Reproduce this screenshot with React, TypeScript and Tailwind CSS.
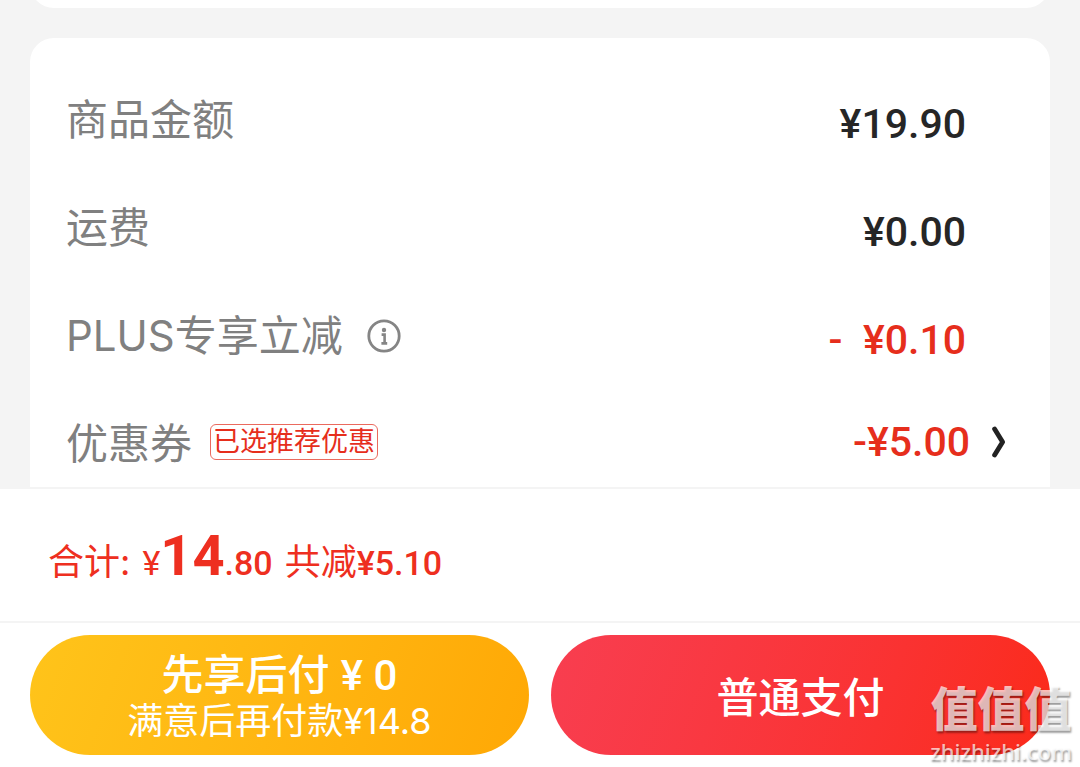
import React from 'react';
import clsx from 'clsx';

interface PriceRowProps {
  label: string;
  value: string;
  discount?: boolean;
  children?: React.ReactNode;
}

const PriceRow: React.FC<PriceRowProps> = ({ label, value, discount, children }) => (
  <div className="flex h-27 items-center justify-between pr-12">
    <dt className="flex items-center text-[42px] leading-[60px] text-[#808080]">
      {label}
      {children}
    </dt>
    <dd
      className={clsx(
        'pt-2 font-[Roboto] text-[41px] leading-[60px] font-medium whitespace-pre',
        discount ? 'text-[#e62e1c]' : 'text-[#262626]'
      )}
    >
      {value}
    </dd>
  </div>
);

const InfoIcon = () => (
  <svg width="34" height="34" viewBox="0 0 34 34" fill="none" aria-hidden="true">
    <circle cx="17" cy="17" r="15.2" stroke="#858585" strokeWidth="2.8" />
    <circle cx="17" cy="11" r="2.2" fill="#858585" />
    <path d="M14.6 15.6H17.6V24.4M14.4 24.4H20.2" stroke="#858585" strokeWidth="2.6" />
  </svg>
);

const ChevronIcon = () => (
  <svg width="14" height="32" viewBox="0 0 14 32" fill="none" aria-hidden="true">
    <path d="M2.6 3L10.6 16L2.6 29" stroke="#222" strokeWidth="4.8" strokeLinecap="round" strokeLinejoin="round" />
  </svg>
);

const Watermark = () => (
  <div className="pointer-events-none absolute right-2 bottom-1.5 flex flex-col items-center gap-2 text-white/70 [text-shadow:1px_2px_2px_rgba(0,0,0,0.4)]">
    <span className="text-[47px] leading-[48px] font-black">值值值</span>
    <span className="font-['Noto_Sans'] text-[22px] leading-5 font-medium">zhizhizhi.com</span>
  </div>
);

export default function App() {
  return (
    <div className="relative flex h-screen flex-col overflow-hidden bg-[#f4f4f4] font-['Inter','Noto_Sans_CJK_SC',sans-serif]">
      <main className="flex min-h-0 flex-1 flex-col px-7.5">
        <div className="-mt-10 h-12 shrink-0 rounded-b-3xl bg-white" />
        <dl className="mt-7.5 flex-1 overflow-hidden rounded-t-3xl bg-white px-9 pt-7">
          <PriceRow label="商品金额" value="¥19.90" />
          <PriceRow label="运费" value="¥0.00" />
          <PriceRow label="PLUS专享立减" value="-  ¥0.10" discount>
            <button type="button" aria-label="说明" className="ml-6">
              <InfoIcon />
            </button>
          </PriceRow>
          <div className="flex h-27 items-center justify-between pr-2">
            <dt className="flex items-center text-[42px] leading-[60px] text-[#808080]">
              优惠券
              <span className="mb-1 ml-4.5 rounded-md border border-[#ea6a5e] px-0.5 text-[27px] leading-[34px] text-[#e62e1c]">
                已选推荐优惠
              </span>
            </dt>
            <dd>
              <button
                type="button"
                className="flex items-center gap-5.5 pb-1 font-[Roboto] text-[41px] leading-[60px] font-medium text-[#e62e1c]"
              >
                -¥5.00
                <ChevronIcon />
              </button>
            </dd>
          </div>
        </dl>
      </main>

      <footer className="border-t-2 border-[#f4f4f4] bg-white">
        <div className="flex h-33 items-center px-12 pt-2 text-[#ee2f20]">
          <p className="flex items-baseline text-[36px] leading-[60px]">
            合计:
            <span className="ml-3 font-[Roboto] text-[34px]">¥</span>
            <span className="font-[Roboto] text-[56px] font-bold">14</span>
            <span className="font-[Roboto] text-[34px] font-medium">.80</span>
            <span className="ml-3">共减</span>
            <span className="font-[Roboto] text-[34px] font-medium">¥5.10</span>
          </p>
        </div>
        <div className="flex gap-5.5 border-t-2 border-[#f4f4f4] px-7.5 py-3 text-white">
          <button
            type="button"
            className="flex h-30 flex-1 flex-col items-center justify-center rounded-full bg-linear-110 from-[#ffc41a] to-[#ffa805] pt-1"
          >
            <span className="text-[42px] leading-[46px] font-medium">
              先享后付 <span className="font-[Roboto]">¥ 0</span>
            </span>
            <span className="text-[36px] leading-[44px]">满意后再付款¥14.8</span>
          </button>
          <button
            type="button"
            className="h-30 flex-1 rounded-full bg-linear-110 from-[#f83e50] to-[#fb2a18] pt-1 text-[42px] font-medium"
          >
            普通支付
          </button>
        </div>
      </footer>

      <Watermark />
    </div>
  );
}
